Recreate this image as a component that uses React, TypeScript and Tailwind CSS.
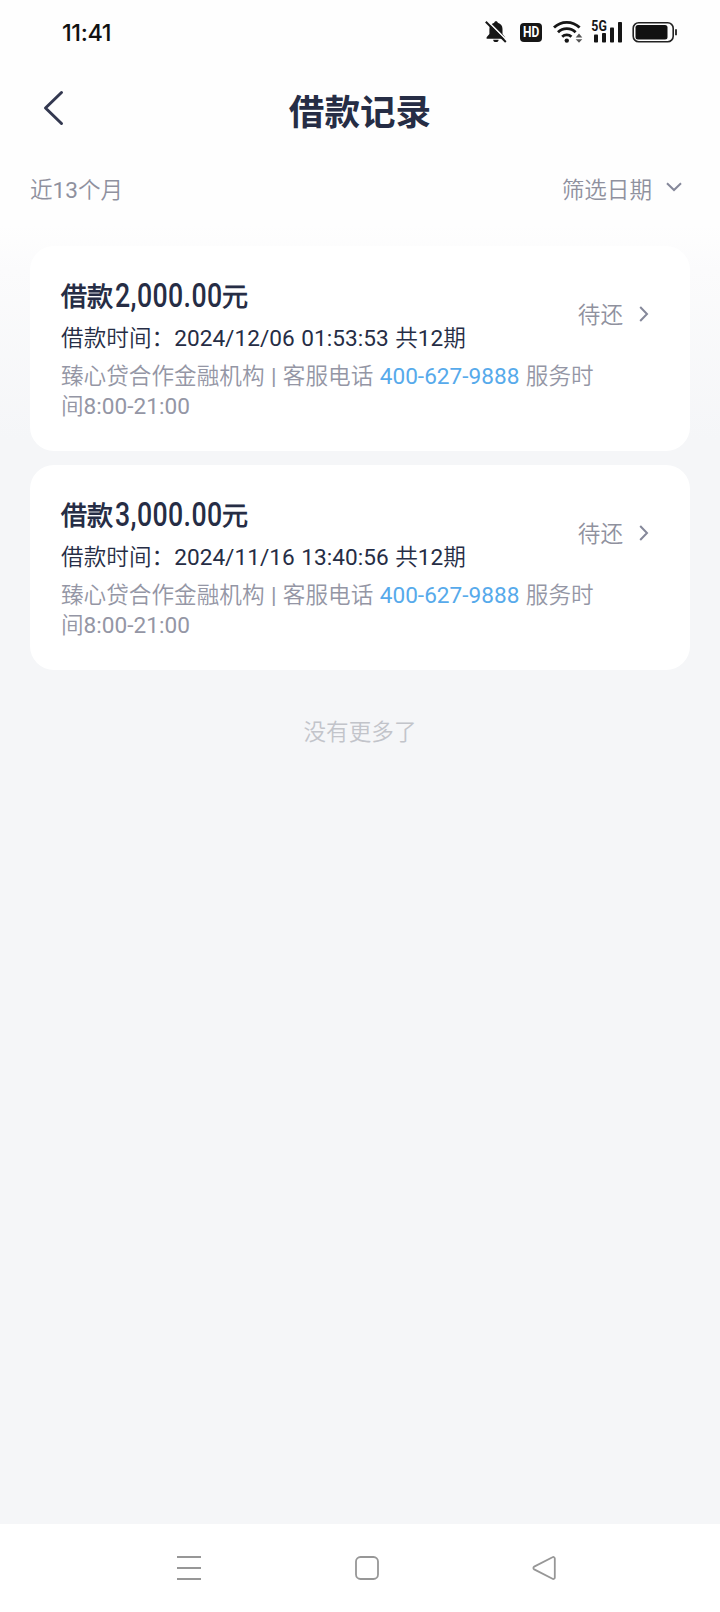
import React from 'react';

interface Loan {
  id: string;
  amount: string;
  time: string;
  periods: number;
  status: string;
}

const loans: Loan[] = [
  { id: '1', amount: '2,000.00', time: '2024/12/06 01:53:53', periods: 12, status: '待还' },
  { id: '2', amount: '3,000.00', time: '2024/11/16 13:40:56', periods: 12, status: '待还' },
];

function StatusBar() {
  return (
    <div className="flex h-16 items-center justify-between pr-[42px] pl-[62px] text-[#111]">
      <span className="pt-px font-['Inter'] text-[23.5px] leading-none font-medium tracking-[-0.4px]">11:41</span>
      <div className="flex items-center">
        {/* muted bell */}
        <svg width="22" height="24" viewBox="0 0 22 24" className="mr-[13px]">
          <path d="M11 1.2c1 0 1.7.7 1.8 1.6 3 .8 4.7 3.2 4.7 6.2v5l2.6 3.3v1.5H1.6v-1.5L4.4 14V9c0-3 1.8-5.4 4.8-6.2.1-.9.8-1.6 1.8-1.6z" fill="#161616" />
          <path d="M8.2 19.8h5.4a2.7 2.3 0 0 1-5.4 0z" fill="#161616" />
          <path d="M1.5 0 22 20.4" stroke="#fefefe" strokeWidth="1.6" />
          <path d="M0.8 1.8 20.8 22" stroke="#161616" strokeWidth="2" />
        </svg>
        <span className="mr-[11px] flex h-[19px] w-[22px] items-center justify-center rounded-[4px] bg-[#161616] font-['Roboto'] text-[15px] leading-none font-bold text-white">
          <span className="inline-block scale-x-[0.8]">HD</span>
        </span>
        {/* wifi */}
        <svg width="30" height="24" viewBox="0 0 30 24" className="mr-[8px]">
          <g fill="none" stroke="#161616" strokeWidth="2.8">
            <path d="M1 7.5a18.3 18.3 0 0 1 25.6 0" />
            <path d="M5 12.2a12.5 12.5 0 0 1 17.6 0" />
            <path d="M9.2 16.8a6.6 6.6 0 0 1 9.2 0" />
          </g>
          <circle cx="13.8" cy="20.6" r="2.2" fill="#161616" />
          <path d="M26 13.5l3.3 4h-6.6zM26 22.8l3.3-3.6h-6.6z" fill="#555" />
        </svg>
        {/* mobile signal */}
        <svg width="32" height="32" viewBox="0 -4 32 32" className="mr-[9px]">
          <g fill="#161616">
            <rect x="3" y="14.5" width="4" height="8" rx="0.8" />
            <rect x="11" y="13" width="4" height="9.500" rx="0.8" />
            <rect x="19" y="7.500" width="4" height="15" rx="0.8" />
            <rect x="27" y="2" width="4" height="20.5" rx="0.8" />
          </g>
          <text x="0.3" y="11" fontFamily="Roboto" fontSize="14.5" fontWeight="700" textLength="15.5" lengthAdjust="spacingAndGlyphs" fill="#161616">5G</text>
        </svg>
        {/* battery */}
        <svg width="46" height="24" viewBox="0 0 46 24">
          <rect x="1.2" y="2.8" width="40" height="19" rx="5.5" fill="none" stroke="#222" strokeWidth="1.6" />
          <rect x="3.5" y="5" width="32" height="14.6" rx="2.5" fill="#111" />
          <path d="M44 9.3v6" stroke="#222" strokeWidth="1.8" />
        </svg>
      </div>
    </div>
  );
}

function LoanCard({ loan }: { loan: Loan }) {
  return (
    <div className="flex h-[205px] justify-between rounded-[24px] bg-white pt-[31px] pr-[41px] pl-[31px]">
      <div className="w-[538px]">
        <div className="flex h-[39px] items-center pt-px text-[26px] leading-[39px] font-bold text-[#262d45]">
          <span>借款</span>
          <span className="w-[109px] pl-[2px] whitespace-nowrap">
            <span className="inline-block origin-left scale-x-[0.785] font-['Roboto'] text-[34px] leading-[39px] font-medium tracking-[0.5px]">{loan.amount}</span>
          </span>
          <span>元</span>
        </div>
        <p className="mt-[5px] leading-[36px] tracking-[0.04px] text-[#262d45] [word-spacing:0.8px]">
          <span lang="zh-CN">借款时间：</span>{loan.time} 共{loan.periods}期
        </p>
        <p className="mt-[5px] leading-[30px] tracking-[0.03px] text-[#9496a5] [word-spacing:0.7px]">
          臻心贷合作金融机构 | 客服电话 <span className="text-[#57aaeb]">400-627-9888</span> 服务时间8:00-21:00
        </p>
      </div>
      <div className="-ml-4 mt-[21px] flex h-[36px] shrink-0 items-center whitespace-nowrap text-[#8f919e]">
        <span>{loan.status}</span>
        <svg width="10" height="16" viewBox="0 0 10 16" className="mb-[5px] ml-[16px]">
          <path d="M1.2 1 8 8l-6.8 7" fill="none" stroke="#85889a" strokeWidth="2" />
        </svg>
      </div>
    </div>
  );
}

function NavBar() {
  return (
    <div className="flex h-[88px] items-center justify-between bg-white pr-[163px] pl-[177px]">
      <svg width="24" height="26" viewBox="0 0 24 26">
        <path d="M0 2h24M0 13h24M0 24h24" stroke="#979797" strokeWidth="1.8" />
      </svg>
      <svg width="26" height="26" viewBox="0 0 26 26" className="ml-[2px]">
        <rect x="2" y="2" width="22" height="22" rx="4.5" fill="none" stroke="#979797" strokeWidth="1.8" />
      </svg>
      <svg width="26" height="26" viewBox="0 0 26 26">
        <path d="M21.5 2.2 3.2 11.6a1.6 1.6 0 0 0 0 2.8L21.5 23.8a1.5 1.5 0 0 0 2.3-1.3V3.5a1.5 1.5 0 0 0-2.3-1.3z" fill="none" stroke="#979797" strokeWidth="1.8" />
      </svg>
    </div>
  );
}

export default function App() {
  return (
    <div className="flex h-[1612px] w-[720px] flex-col bg-[#f5f6f8] font-['Roboto','Noto_Sans_CJK_SC_DemiLight','Noto_Sans_CJK_SC',sans-serif] text-[22.6px]">
      <div className="flex-1 bg-[linear-gradient(to_bottom,#fefefe_0px,#fefefe_225px,#fbfbfc_270px,#f5f6f8_440px)]">
        <StatusBar />
        <header className="grid h-[92px] grid-cols-[1fr_auto_1fr] items-center px-[43px]">
          <svg width="22" height="36" viewBox="0 0 22 36" className="mb-[4px]">
            <path d="M18.5 2.5 2.5 18l16 15.5" fill="none" stroke="#333850" strokeWidth="3" strokeLinecap="round" strokeLinejoin="round" />
          </svg>
          <h1 className="font-['Noto_Sans_CJK_SC',sans-serif] text-[35.6px] font-bold text-[#262d45]">借款记录</h1>
        </header>
        <div className="flex h-[66px] items-center justify-between pt-[3px] pr-[38px] pl-[30px] text-[#8f919e]">
          <span>近13个月</span>
          <div className="flex items-center">
            <span>筛选日期</span>
            <svg width="16" height="10" viewBox="0 0 16 10" className="mb-[6px] ml-[14px]">
              <path d="M1 1.2 8 8l7-6.8" fill="none" stroke="#85889a" strokeWidth="2" />
            </svg>
          </div>
        </div>
        <div className="flex flex-col gap-[14px] px-[30px] pt-[24px]">
          {loans.map(loan => (
            <LoanCard key={loan.id} loan={loan} />
          ))}
        </div>
        <p className="mt-[46px] text-center leading-[34px] text-[#c2c4ca]">没有更多了</p>
      </div>
      <NavBar />
    </div>
  );
}
